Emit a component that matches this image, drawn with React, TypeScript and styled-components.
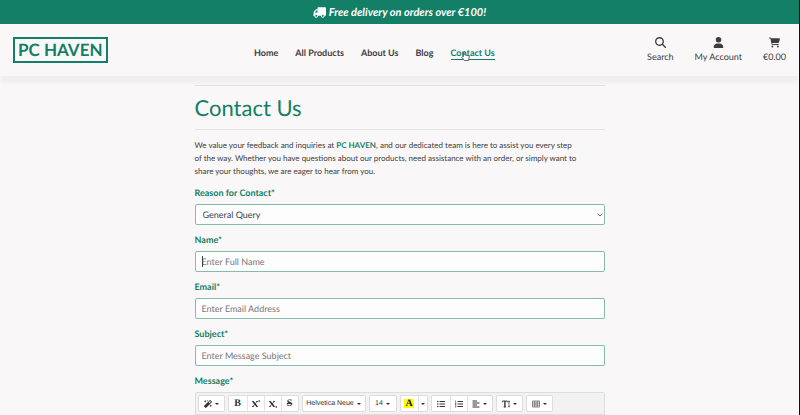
import React from "react";
import styled, { createGlobalStyle } from "styled-components";
import { FaMagic, FaListUl, FaListOl, FaAlignLeft } from "react-icons/fa";
import { FaTruck, FaUser, FaCartShopping, FaMagnifyingGlass } from "react-icons/fa6";

const green = "#137f66";
const ink = "#3d3d40";

const GlobalStyle = createGlobalStyle`
  *, *::before, *::after { box-sizing: border-box; }
  body {
    margin: 0;
    background: #faf7f8;
    color: ${ink};
    font-family: Lato, "Liberation Sans", sans-serif;
    font-size: 9px;
    line-height: 13px;
    text-rendering: geometricPrecision;
  }
  button, input, select { font: inherit; color: inherit; text-rendering: inherit; }
`;

const Page = styled.div`
  height: 100vh;
  overflow: hidden;
  border-right: 1px solid #111;
`;

const Banner = styled.div`
  display: flex;
  align-items: center;
  justify-content: center;
  gap: 3px;
  height: 24px;
  background: ${green};
  color: #fff;
  font-size: 11px;
  font-weight: 700;
  font-style: italic;
`;

const TruckIcon = styled(FaTruck)`
  width: 13px;
  height: 13px;
  transform: scaleX(-1);
`;

const Header = styled.header`
  display: grid;
  grid-template-columns: 241px 1fr auto;
  align-items: center;
  height: 52px;
  padding: 0 13px;
  box-shadow: 0 8px 4px -1px #f1eeef;
`;

const Logo = styled.a`
  justify-self: start;
  padding: 0 3px;
  border: 2px solid ${green};
  color: ${green};
  font-size: 17px;
  font-weight: 700;
  line-height: 22px;
  text-decoration: none;
  white-space: nowrap;
`;

const Nav = styled.nav`
  display: flex;
  gap: 17px;
  padding-top: 6px;
  white-space: nowrap;
`;

const NavLink = styled.a<{ $active?: boolean }>`
  position: relative;
  border-bottom: 1px solid ${(p) => (p.$active ? green : "transparent")};
  color: ${(p) => (p.$active ? green : ink)};
  font-weight: 700;
  text-decoration: none;
`;

const Pointer = styled.svg`
  position: absolute;
  top: 5px;
  left: 10px;
  width: 9px;
  height: 10px;
`;

const Actions = styled.div`
  display: flex;
  gap: 21px;
`;

const Action = styled.a`
  display: flex;
  flex-direction: column;
  align-items: center;
  gap: 2px;
  color: ${ink};
  text-decoration: none;
  white-space: nowrap;
  svg { width: 11px; height: 11px; }
`;

const Main = styled.main`
  max-width: 410px;
  margin: 9px auto 0;
`;

const Title = styled.h1`
  margin: 0 0 9px;
  padding: 6px 0;
  border: solid #e4e1e2;
  border-width: 1px 0;
  color: ${green};
  font-size: 22px;
  font-weight: 400;
  line-height: 31px;
`;

const Intro = styled.p`
  margin: 0 0 8px;
  font-size: 8px;
  strong { color: ${green}; }
`;

const Field = styled.div`
  margin-bottom: 8px;
`;

const Label = styled.label`
  display: block;
  margin-bottom: 4px;
  color: ${green};
  font-weight: 700;
  line-height: 14px;
`;

const Control = styled.div`
  position: relative;
`;

const TextInput = styled.input`
  display: block;
  width: 100%;
  height: 21px;
  padding: 0 6px;
  border: 1px solid #84bba9;
  border-radius: 2px;
  background: #fefdfe;
  outline: none;
  &::placeholder { color: #77777a; opacity: 1; }
`;

const Select = styled.select`
  display: block;
  width: 100%;
  height: 21px;
  padding: 0 7px;
  border: 1px solid #84bba9;
  border-radius: 2px;
  background: #fefdfe;
  appearance: none;
`;

const Chevron = styled.svg`
  position: absolute;
  top: 9px;
  right: 2px;
  width: 6px;
  height: 4px;
  pointer-events: none;
`;

const TextCaret = styled.span`
  position: absolute;
  top: 5px;
  left: 7px;
  width: 1px;
  height: 11px;
  background: #444;
`;

const Editor = styled.div`
  border: 1px solid #dedcdd;
  border-radius: 2px;
`;

const Toolbar = styled.div`
  display: flex;
  gap: 3px;
  padding: 2px;
  background: #f3f2f3;
  border-bottom: 1px solid #dedcdd;
`;

const Group = styled.div`
  display: flex;
  border: 1px solid #dedddd;
  border-radius: 2px;
  background: #fff;
`;

const Tool = styled.button<{ $width: number }>`
  display: flex;
  align-items: center;
  justify-content: center;
  gap: 3px;
  width: ${(p) => p.$width}px;
  height: 15px;
  padding: 0;
  border: 0;
  background: none;
  color: #333;
  font-family: "Liberation Sans", Arial, sans-serif;
  font-size: 7px;
  line-height: 9px;
  white-space: nowrap;
  & + & { border-left: 1px solid #e5e4e4; }
  svg { width: 8px; height: 8px; }
`;

const Triangle = styled.span`
  border: 2px solid transparent;
  border-top-color: #333;
  border-bottom: 0;
`;

const Letter = styled.span<{ $struck?: boolean }>`
  font-family: "Liberation Serif", serif;
  font-size: 10px;
  font-weight: 700;
  text-decoration: ${(p) => (p.$struck ? "line-through" : "none")};
`;

const Swatch = styled(Letter)`
  padding: 0 1px;
  background: #ff0;
  color: #111;
`;

const Message = styled.div`
  min-height: 90px;
  background: #fff;
  outline: none;
`;

const ScriptIcon = ({ low }: { low?: boolean }) => (
  <svg viewBox="0 0 8 8" fill="none" stroke="#333" aria-hidden="true">
    <path d="M1 1.5 5 6.5" strokeWidth="1.5" />
    <path d="M5 1.5 1 6.5M0 1.5h2M4 1.5h2M0 6.5h2M4 6.5h2" strokeWidth=".8" />
    <path d={low ? "M7.2 6v2" : "M7.2 0v2"} />
  </svg>
);

const HeightIcon = () => (
  <svg viewBox="0 0 8 8" fill="none" stroke="#333" aria-hidden="true">
    <path d="M.4 2.3V1h4.9v1.3M1.7 7h2.4" strokeWidth=".9" />
    <path d="M2.9 1v6" strokeWidth="1.4" />
    <path d="M7 1.5v5M6.2 2 7 .8 7.8 2M6.2 6 7 7.2 7.8 6" strokeWidth=".7" />
  </svg>
);

const GridIcon = () => (
  <svg viewBox="0 0 8 8" fill="none" stroke="#555" aria-hidden="true">
    <path d="M.4 1h7.2v6H.4ZM.4 3h7.2M.4 5h7.2M2.8 1v6M5.2 1v6" strokeWidth=".7" />
  </svg>
);

const links = ["Home", "All Products", "About Us", "Blog", "Contact Us"];

const fields = [
  { id: "name", label: "Name*", hint: "Enter Full Name", type: "text", caret: true },
  { id: "email", label: "Email*", hint: "Enter Email Address", type: "email", caret: false },
  { id: "subject", label: "Subject*", hint: "Enter Message Subject", type: "text", caret: false },
];

export default function App() {
  return (
    <Page>
      <GlobalStyle />
      <Banner>
        <TruckIcon />
        <span>Free delivery on orders over €100!</span>
      </Banner>
      <Header>
        <Logo href="#">PC HAVEN</Logo>
        <Nav>
          {links.map((name) => (
            <NavLink key={name} href="#" $active={name === "Contact Us"}>
              {name}
              {name === "Contact Us" && (
                <Pointer viewBox="0 0 9 10" aria-hidden="true">
                  <path
                    d="M2.5 5.5V1.3q.7-1 1.3 0V4l3.6.6q.9.2.8 1.2L7.6 9.5H3.5L.8 6.3q.3-1 1.7-.8Z"
                    fill="#fff"
                    stroke="#444"
                    strokeWidth=".8"
                  />
                </Pointer>
              )}
            </NavLink>
          ))}
        </Nav>
        <Actions>
          <Action href="#"><FaMagnifyingGlass />Search</Action>
          <Action href="#"><FaUser />My Account</Action>
          <Action href="#"><FaCartShopping />€0.00</Action>
        </Actions>
      </Header>
      <Main>
        <Title>Contact Us</Title>
        <Intro>
          We value your feedback and inquiries at <strong>PC HAVEN</strong>, and our dedicated team
          is here to assist you every step
          <br />
          of the way. Whether you have questions about our products, need assistance with an order,
          or simply want to
          <br />
          share your thoughts, we are eager to hear from you.
        </Intro>
        <form>
          <Field>
            <Label htmlFor="reason">Reason for Contact*</Label>
            <Control>
              <Select id="reason">
                <option>General Query</option>
              </Select>
              <Chevron viewBox="0 0 6 4" aria-hidden="true">
                <path d="M.7.7 3 3 5.3.7" fill="none" stroke="#777" />
              </Chevron>
            </Control>
          </Field>
          {fields.map((f) => (
            <Field key={f.id}>
              <Label htmlFor={f.id}>{f.label}</Label>
              <Control>
                <TextInput id={f.id} type={f.type} placeholder={f.hint} />
                {f.caret && <TextCaret />}
              </Control>
            </Field>
          ))}
          <Field>
            <Label id="message-label">Message*</Label>
            <Editor>
              <Toolbar>
                <Group>
                  <Tool type="button" $width={25} aria-label="Style"><FaMagic /><Triangle /></Tool>
                </Group>
                <Group>
                  <Tool type="button" $width={18} aria-label="Bold"><Letter>B</Letter></Tool>
                  <Tool type="button" $width={17} aria-label="Superscript"><ScriptIcon /></Tool>
                  <Tool type="button" $width={17} aria-label="Subscript"><ScriptIcon low /></Tool>
                  <Tool type="button" $width={17} aria-label="Strikethrough"><Letter $struck>S</Letter></Tool>
                </Group>
                <Group>
                  <Tool type="button" $width={62}>Helvetica Neue<Triangle /></Tool>
                </Group>
                <Group>
                  <Tool type="button" $width={26}>14<Triangle /></Tool>
                </Group>
                <Group>
                  <Tool type="button" $width={17} aria-label="Text colour"><Swatch>A</Swatch></Tool>
                  <Tool type="button" $width={9} aria-label="More colours"><Triangle /></Tool>
                </Group>
                <Group>
                  <Tool type="button" $width={18} aria-label="Bulleted list"><FaListUl /></Tool>
                  <Tool type="button" $width={17} aria-label="Numbered list"><FaListOl /></Tool>
                  <Tool type="button" $width={25} aria-label="Align"><FaAlignLeft /><Triangle /></Tool>
                </Group>
                <Group>
                  <Tool type="button" $width={25} aria-label="Line height"><HeightIcon /><Triangle /></Tool>
                </Group>
                <Group>
                  <Tool type="button" $width={25} aria-label="Table"><GridIcon /><Triangle /></Tool>
                </Group>
              </Toolbar>
              <Message contentEditable role="textbox" aria-labelledby="message-label" />
            </Editor>
          </Field>
        </form>
      </Main>
    </Page>
  );
}
